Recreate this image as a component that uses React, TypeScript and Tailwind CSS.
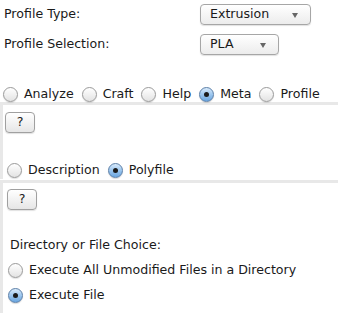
import React from "react";

const font = { fontFamily: '"DejaVu Sans", "Liberation Sans", sans-serif' };

function Radio({ checked }: { checked?: boolean }) {
  if (checked) {
    return (
      <span className="relative inline-flex h-[15px] w-[15px] shrink-0 items-center justify-center rounded-full border border-[#5b7fa8] bg-gradient-to-b from-[#d9ebfb] via-[#9cc6ee] to-[#6aa6e0] shadow-[0_1px_1px_rgba(0,0,0,0.15)]">
        <span className="h-[5px] w-[5px] rounded-full bg-[#1a1a1a]" />
      </span>
    );
  }
  return (
    <span className="inline-block h-[15px] w-[15px] shrink-0 rounded-full border border-[#9a9a9a] bg-gradient-to-b from-[#ffffff] to-[#e3e3e3] shadow-[0_1px_1px_rgba(0,0,0,0.12)]" />
  );
}

function RadioItem({ label, checked }: { label: string; checked?: boolean }) {
  return (
    <span className="flex items-center gap-[6px]">
      <Radio checked={checked} />
      <span>{label}</span>
    </span>
  );
}

function Select({ value, width }: { value: string; width: string }) {
  return (
    <div
      className={`relative flex h-[21px] ${width} items-center rounded-[4px] border border-[#a6a6a6] bg-gradient-to-b from-[#ffffff] to-[#ececec] pl-[9px] text-[#1a1a1a] shadow-[0_1px_1px_rgba(0,0,0,0.12)]`}
    >
      <span>{value}</span>
      <span className="absolute right-[12px] top-[8px] h-0 w-0 border-l-[3px] border-r-[3px] border-t-[5px] border-l-transparent border-r-transparent border-t-[#666666]" />
    </div>
  );
}

function HelpButton() {
  return (
    <div className="flex h-[21px] w-[30px] items-center justify-center rounded-[4px] border border-[#a0a0a0] bg-gradient-to-b from-[#ffffff] to-[#e6e6e6] text-[#1a1a1a] shadow-[0_1px_1px_rgba(0,0,0,0.12)]">
      ?
    </div>
  );
}

export default function App() {
  return (
    <div className="h-[313px] w-[338px] overflow-hidden bg-white text-[12.6px] text-[#1a1a1a]" style={font}>
      <div className="pt-[4px]">
        <div className="flex h-[21px] items-center">
          <span className="w-[200px] pl-[4px]">Profile Type:</span>
          <Select value="Extrusion" width="w-[111px]" />
        </div>
        <div className="mt-[9px] flex h-[21px] items-center">
          <span className="w-[200px] pl-[4px]">Profile Selection:</span>
          <Select value="PLA" width="w-[79px]" />
        </div>
      </div>
      <div className="mt-[31px] flex h-[16px] items-center gap-[8px] pl-[3px]">
        <RadioItem label="Analyze" />
        <RadioItem label="Craft" />
        <RadioItem label="Help" />
        <RadioItem label="Meta" checked />
        <RadioItem label="Profile" />
      </div>
      <div className="border-l-[3px] border-t-[3px] border-[#e8e8e8]">
        <div className="ml-[2px] mt-[7px]">
          <HelpButton />
        </div>
        <div className="ml-[4px] mt-[28px] flex h-[18px] items-center gap-[8px]">
          <RadioItem label="Description" />
          <RadioItem label="Polyfile" checked />
        </div>
      </div>
      <div className="mt-[1px] h-[140px] border-l-[3px] border-t-[3px] border-[#e8e8e8]">
        <div className="ml-[4px] mt-[6px]">
          <HelpButton />
        </div>
        <div className="ml-[7px] mt-[26px] flex h-[18px] items-center">Directory or File Choice:</div>
        <div className="ml-[5px] mt-[7px] flex h-[18px] items-center">
          <RadioItem label="Execute All Unmodified Files in a Directory" />
        </div>
        <div className="ml-[5px] mt-[7px] flex h-[18px] items-center">
          <RadioItem label="Execute File" checked />
        </div>
      </div>
    </div>
  );
}
